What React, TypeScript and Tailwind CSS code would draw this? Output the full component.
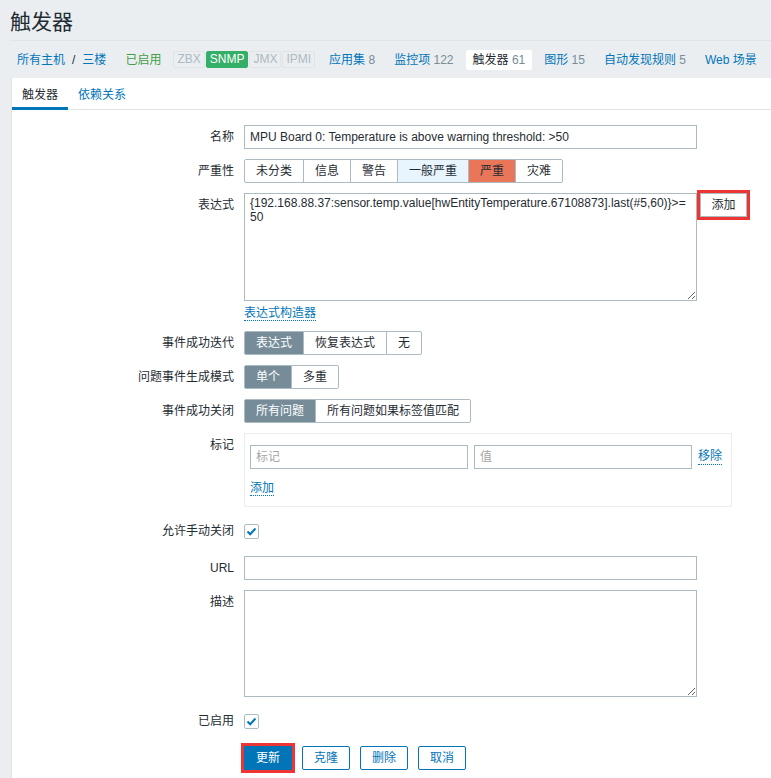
import React from 'react'

type Seg = { label: string; cls?: string }

function Segmented({ items }: { items: Seg[] }) {
  return (
    <div className="flex">
      {items.map((s) => (
        <span
          key={s.label}
          className={`h-[24px] px-[11px] leading-[22px] border border-[#acbbc2] -ml-px first:ml-0 first:rounded-l-[2px] last:rounded-r-[2px] whitespace-nowrap ${s.cls ?? 'bg-white text-[#1f2c33]'}`}
        >
          {s.label}
        </span>
      ))}
    </div>
  )
}

function Row({ label, children, h = 'leading-[24px]' }: { label: string; children: React.ReactNode; h?: string }) {
  return (
    <div className="flex">
      <div className={`w-[222px] shrink-0 text-right ${h}`}>{label}</div>
      <div className="ml-[10px] flex-1">{children}</div>
    </div>
  )
}

function Check() {
  return (
    <span className="w-[15px] h-[15px] border border-[#acbbc2] rounded-[2px] bg-white flex items-center justify-center">
      <svg width="11" height="11" viewBox="0 0 11 11" fill="none">
        <path d="M1.5 5.5 L4.2 8.2 L9.5 2.5" stroke="#0275b8" strokeWidth="2" />
      </svg>
    </span>
  )
}

function DotLink({ children, className = '' }: { children: React.ReactNode; className?: string }) {
  return (
    <span className={`text-[#0275b8] border-b border-dotted border-[#0275b8] ${className}`}>{children}</span>
  )
}

const input = 'block h-[24px] border border-[#acbbc2] bg-white px-[5px] text-[12px] text-[#1f2c33] outline-none'

export default function App() {
  return (
    <div className="h-[778px] overflow-hidden flex flex-col bg-[#ebeef1] text-[12px] text-[#1f2c33] font-['Liberation_Sans','Noto_Sans_CJK_SC',sans-serif]">
      {/* header */}
      <div className="ml-[10px] h-[41px] pt-[9px] border-b border-[#dfe4e7]">
        <h1 className="text-[21px] leading-[25px]">触发器</h1>
      </div>

      {/* host nav */}
      <div className="ml-[10px] h-[37px] pt-[9px] flex items-start leading-[20px] whitespace-nowrap">
        <div className="px-[7px] text-[#0275b8] flex">
          <span>所有主机</span>
          <span className="px-[7px] text-[#1f2c33]">/</span>
          <span>三楼</span>
        </div>
        <div className="ml-[5px] px-[7px] text-[#429e47]">已启用</div>
        <div className="ml-[5px] flex items-start mt-[1px] leading-[15px]">
          <span className="px-[3px] border border-[#dfe4e7] rounded-[2px] text-[#acbbc2]">ZBX</span>
          <span className="ml-px px-[3px] border border-[#34af67] rounded-[2px] bg-[#34af67] text-white">SNMP</span>
          <span className="ml-px px-[3px] border border-[#dfe4e7] rounded-[2px] text-[#acbbc2]">JMX</span>
          <span className="ml-px px-[3px] border border-[#dfe4e7] rounded-[2px] text-[#acbbc2]">IPMI</span>
        </div>
        <div className="ml-[7px] px-[7px]"><span className="text-[#0275b8]">应用集</span> <span className="text-[#768d99]">8</span></div>
        <div className="ml-[5px] px-[7px]"><span className="text-[#0275b8]">监控项</span> <span className="text-[#768d99]">122</span></div>
        <div className="ml-[5px] px-[7px] bg-white rounded-[2px]"><span>触发器</span> <span className="text-[#768d99]">61</span></div>
        <div className="ml-[5px] px-[7px]"><span className="text-[#0275b8]">图形</span> <span className="text-[#768d99]">15</span></div>
        <div className="ml-[5px] px-[7px]"><span className="text-[#0275b8]">自动发现规则</span> <span className="text-[#768d99]">5</span></div>
        <div className="ml-[5px] px-[7px] text-[#0275b8]">Web 场景</div>
      </div>

      {/* panel */}
      <div className="ml-[11px] flex-1 bg-white border-l border-[#dfe4e7]">
        <div className="flex h-[32px] border-b border-[#dfe4e7]">
          <div className="h-[32px] -mb-px pt-[8px] px-[10px] leading-[18px] border-b-[3px] border-[#0275b8]">触发器</div>
          <div className="h-[32px] pt-[8px] px-[10px] leading-[18px] text-[#0275b8]">依赖关系</div>
        </div>

        <div className="pt-[15px] flex flex-col gap-[10px]">
          <Row label="名称">
            <input className={`${input} w-[453px]`} defaultValue="MPU Board 0: Temperature is above warning threshold: >50" />
          </Row>

          <Row label="严重性">
            <Segmented
              items={[
                { label: '未分类' },
                { label: '信息' },
                { label: '警告' },
                { label: '一般严重', cls: 'bg-[#e8f5ff] text-[#1f2c33]' },
                { label: '严重', cls: 'bg-[#e97659] text-[#1f2c33]' },
                { label: '灾难' },
              ]}
            />
          </Row>

          <Row label="表达式">
            <div className="flex items-start">
              <textarea
                className="block w-[453px] h-[108px] border border-[#acbbc2] px-[5px] py-[2px] leading-[14px] text-[12px] text-[#1f2c33] outline-none"
                defaultValue={'{192.168.88.37:sensor.temp.value[hwEntityTemperature.67108873].last(#5,60)}>=\n50'}
              />
              <span className="ml-[3px] w-[47px] h-[24px] leading-[22px] text-center border border-[#acbbc2] bg-white outline-[3px] outline-solid outline-[#ee3535]">
                添加
              </span>
            </div>
            <div className="mt-[4px] leading-[16px]">
              <DotLink>表达式构造器</DotLink>
            </div>
          </Row>

          <Row label="事件成功迭代">
            <Segmented
              items={[
                { label: '表达式', cls: 'bg-[#768d99] border-[#768d99] text-white' },
                { label: '恢复表达式' },
                { label: '无' },
              ]}
            />
          </Row>

          <Row label="问题事件生成模式">
            <Segmented items={[{ label: '单个', cls: 'bg-[#768d99] border-[#768d99] text-white' }, { label: '多重' }]} />
          </Row>

          <Row label="事件成功关闭">
            <Segmented
              items={[{ label: '所有问题', cls: 'bg-[#768d99] border-[#768d99] text-white' }, { label: '所有问题如果标签值匹配' }]}
            />
          </Row>

          <Row label="标记">
            <div className="w-[488px] border border-[#ebeef1] pt-[11px] px-[5px] pb-[9px]">
              <div className="flex items-center">
                <input className={`${input} w-[218px] placeholder:text-[#a6a6a6]`} placeholder="标记" />
                <input className={`${input} w-[218px] ml-[6px] placeholder:text-[#a6a6a6]`} placeholder="值" />
                <DotLink className="ml-[6px] leading-[15px]">移除</DotLink>
              </div>
              <div className="mt-[11px] leading-[17px]">
                <DotLink>添加</DotLink>
              </div>
            </div>
          </Row>

          <Row label="允许手动关闭" h="leading-[29px]">
            <div className="h-[29px] flex items-center">
              <Check />
            </div>
          </Row>

          <Row label="URL">
            <input className={`${input} w-[453px]`} />
          </Row>

          <Row label="描述">
            <textarea className="block w-[453px] h-[107px] border border-[#acbbc2] px-[5px] outline-none" />
          </Row>

          <Row label="已启用" h="leading-[29px]">
            <div className="h-[29px] flex items-center">
              <Check />
            </div>
          </Row>

          <Row label="">
            <div className="flex gap-[10px]">
              <span className="w-[48px] h-[24px] leading-[22px] text-center border border-[#0275b8] bg-[#0275b8] text-white outline-[3px] outline-solid outline-[#ee3535]">
                更新
              </span>
              <span className="w-[48px] h-[24px] leading-[22px] text-center border border-[#0275b8] rounded-[2px] text-[#0275b8]">克隆</span>
              <span className="w-[48px] h-[24px] leading-[22px] text-center border border-[#0275b8] rounded-[2px] text-[#0275b8]">删除</span>
              <span className="w-[48px] h-[24px] leading-[22px] text-center border border-[#0275b8] rounded-[2px] text-[#0275b8]">取消</span>
            </div>
          </Row>
        </div>
      </div>
    </div>
  )
}
